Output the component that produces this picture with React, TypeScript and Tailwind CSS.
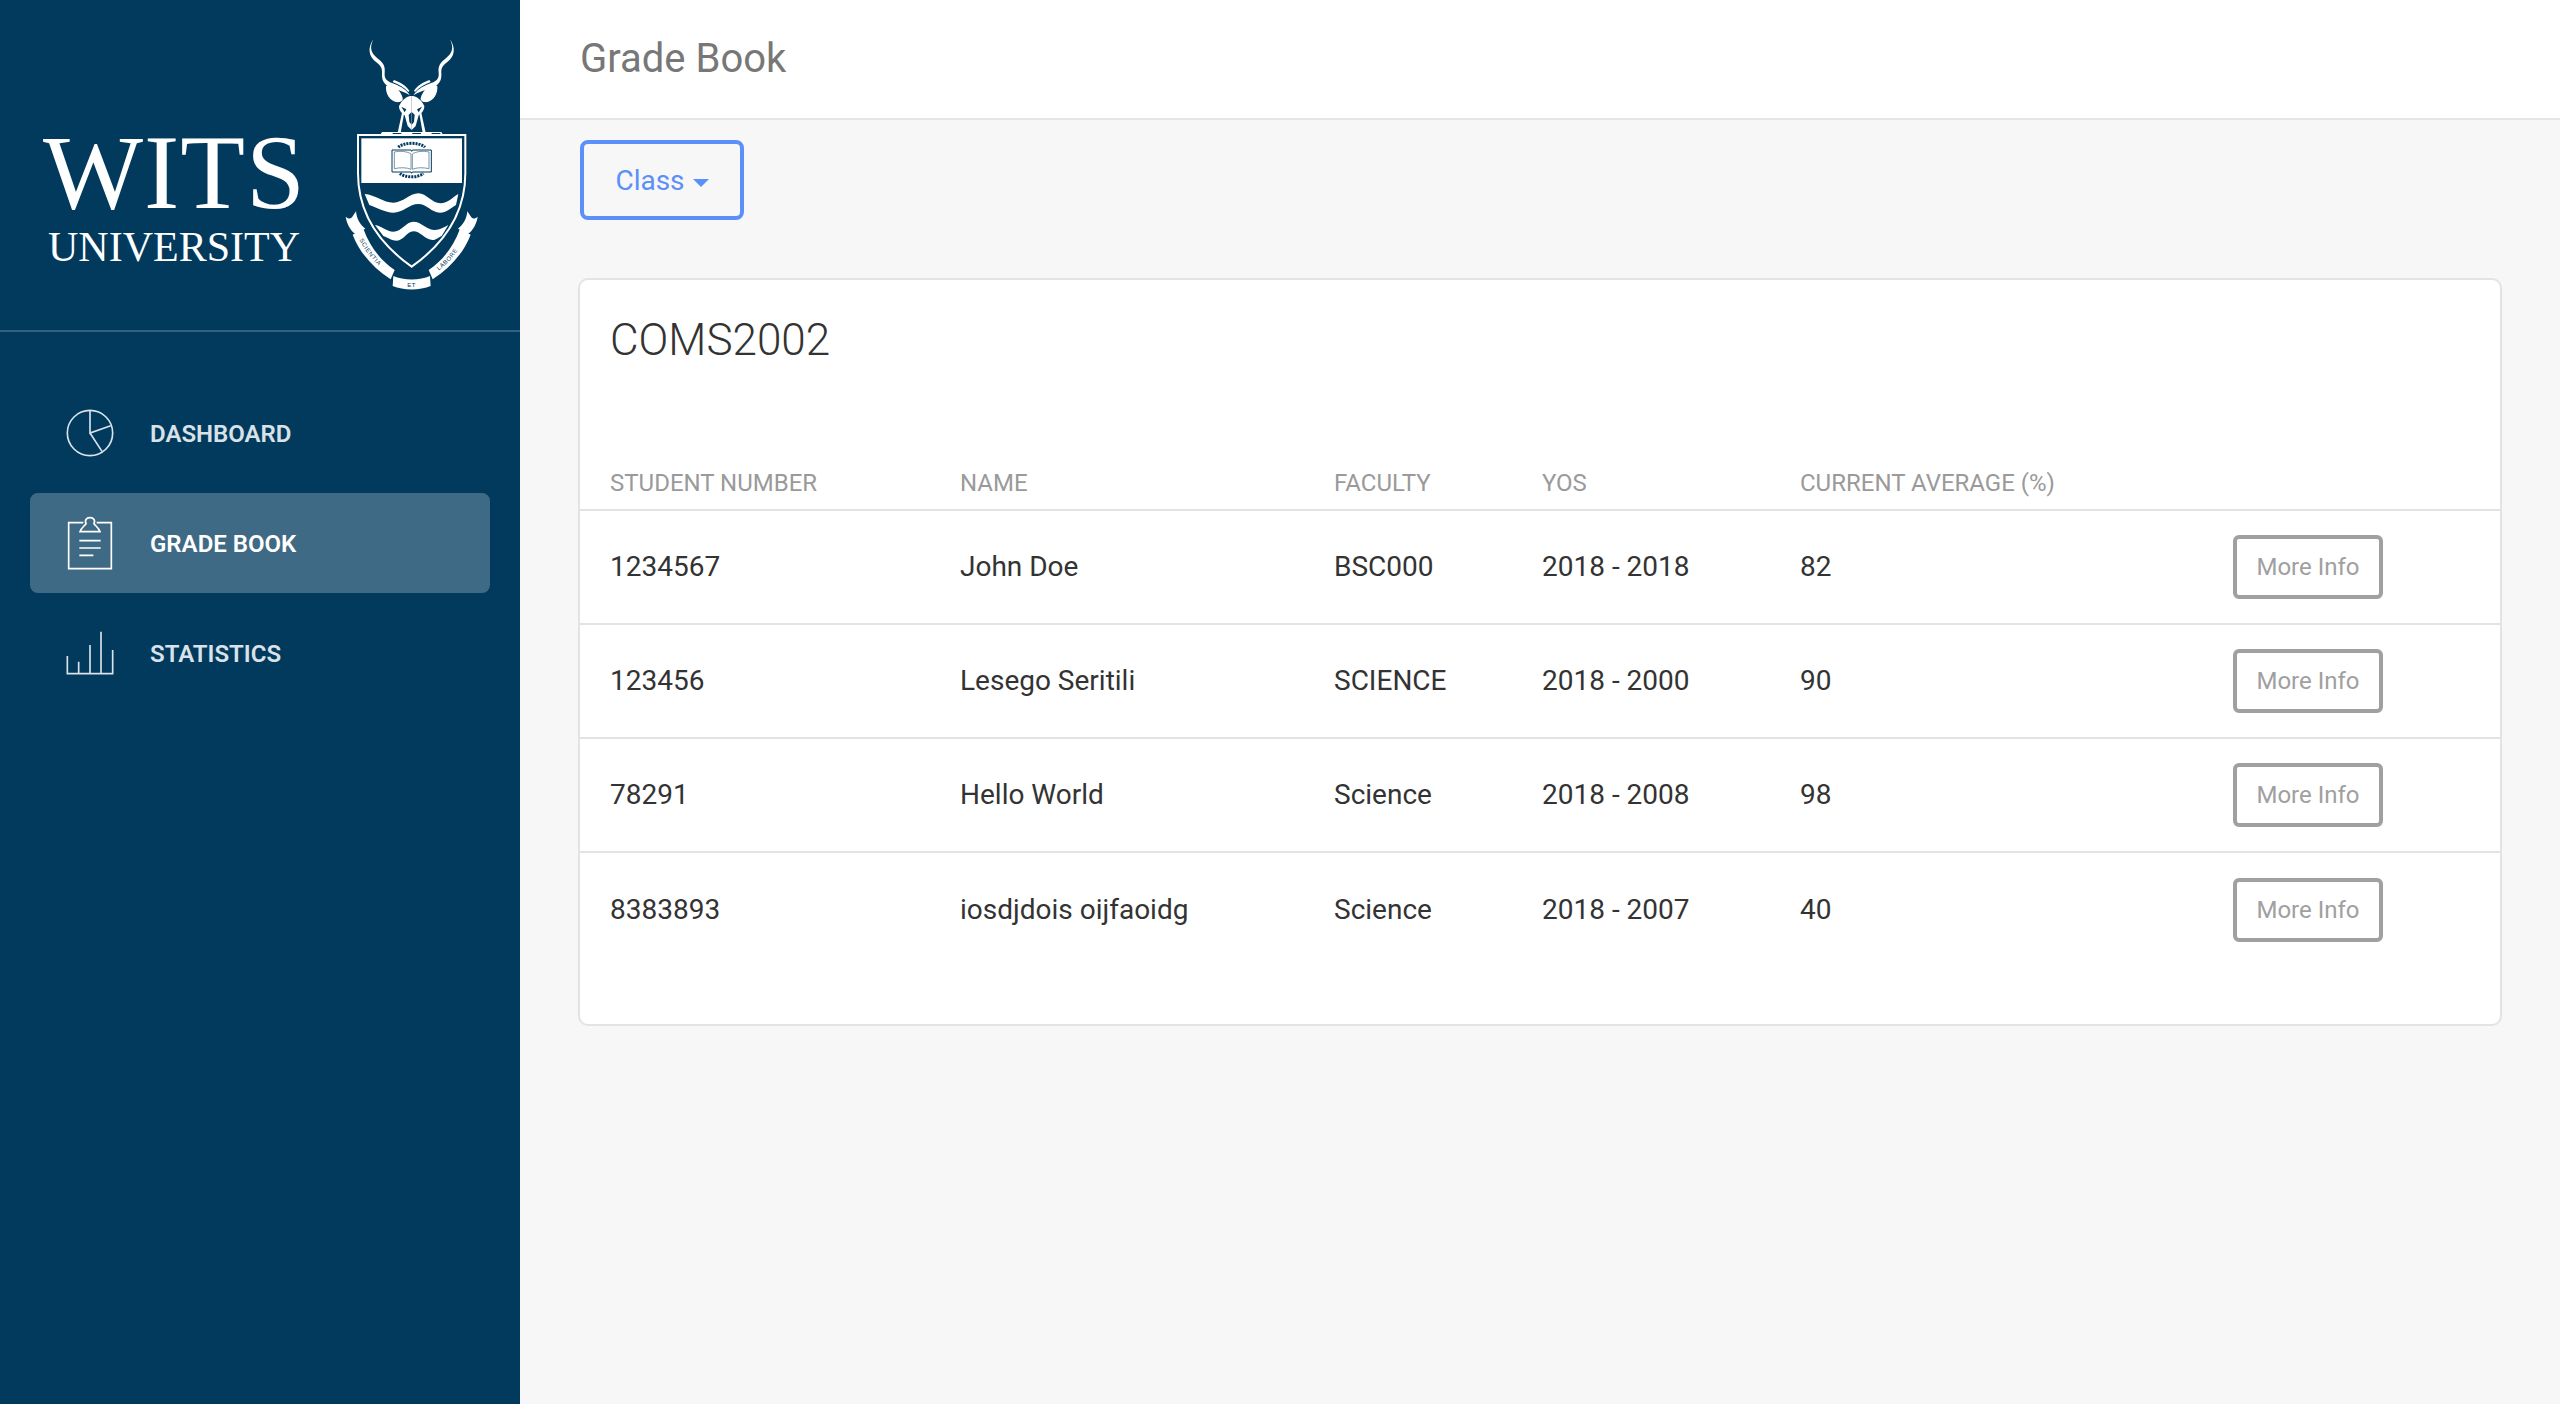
const rows = [
  { id: "1234567", name: "John Doe", faculty: "BSC000", yos: "2018 - 2018", avg: "82" },
  { id: "123456", name: "Lesego Seritili", faculty: "SCIENCE", yos: "2018 - 2000", avg: "90" },
  { id: "78291", name: "Hello World", faculty: "Science", yos: "2018 - 2008", avg: "98" },
  { id: "8383893", name: "iosdjdois oijfaoidg", faculty: "Science", yos: "2018 - 2007", avg: "40" },
];

function HalfKudu() {
  return (
    <g fill="#fff">
      {/* horn */}
      <path d="M130 28 C118 52 122 70 144 86 C160 98 166 108 164 128 C162 148 172 154 194 162 C214 170 230 180 240 196 C224 186 206 180 186 174 C166 168 154 154 156 130 C157 114 152 106 138 96 C116 80 112 54 130 28 Z" />
      <path d="M192 150 C212 157 226 166 238 182 L235 186 C222 172 208 164 188 156 Z" />
      {/* ear */}
      <path d="M168 168 C188 162 210 176 218 204 C220 214 208 218 198 216 C180 212 166 192 168 168 Z" />
      {/* face side */}
      <path d="M245 198 C232 198 222 206 214 216 L207 228 C207 242 216 250 224 256 L233 288 L245 300 Z" />
      <path d="M214 230 L229 238 L224 247 Z" fill="#023a5d" />
      <path d="M236 254 L245 246 L245 284 L238 276 Z" fill="#023a5d" />
      {/* neck */}
      <path d="M216 248 L222 252 L212 308 L203 308 Z" />
    </g>
  );
}

function HalfScroll({ flip }: { flip?: boolean }) {
  return (
    <g fill="#fff" transform={flip ? "translate(490 0) scale(-1 1)" : undefined}>
      <path d="M68 614 L100 596 C120 650 150 690 194 720 L182 748 C130 714 90 670 68 614 Z" />
      <path d="M47 560 C54 566 60 568 66 562 L78 544 C80 566 90 584 106 596 L76 612 C60 600 50 580 47 560 Z" />
    </g>
  );
}

function Crest() {
  return (
    <svg viewBox="0 0 480 780" className="h-[260px] w-[160px] shrink-0 overflow-visible">
      <HalfKudu />
      <g transform="translate(490 0) scale(-1 1)">
        <HalfKudu />
      </g>
      {/* lid */}
      <path d="M152 313 L156 306 L334 306 L338 313 Z" fill="#fff" />
      <rect x="188" y="309" width="26" height="7" fill="#023a5d" />
      <rect x="247" y="309" width="26" height="7" fill="#023a5d" />
      <rect x="305" y="309" width="26" height="7" fill="#023a5d" />
      {/* shield */}
      <path
        d="M84 315 L406 315 L406 430 C406 560 330 650 245 710 C160 650 84 560 84 430 Z"
        fill="#023a5d"
        stroke="#fff"
        strokeWidth="6"
      />
      <rect x="94" y="325" width="302" height="134" fill="#fff" />
      {/* waves */}
      <path d="M104 492 C135 494 160 518 190 518 C220 518 238 490 265 490 C290 490 305 520 332 520 C352 520 368 502 385 492 L378 525 C362 534 350 548 330 548 C305 548 290 522 265 522 C238 522 220 548 190 548 C165 548 140 532 118 525 Z" fill="#fff" />
      <path d="M135 585 C155 588 170 605 190 605 C215 605 228 575 250 575 C275 575 290 600 315 600 C330 600 342 592 355 585 L335 618 C325 622 320 630 308 630 C285 630 272 604 250 604 C230 604 222 632 200 632 C185 632 175 624 160 618 Z" fill="#fff" />
      {/* gear */}
      <path d="M205 352 C220 336 270 336 285 352" fill="none" stroke="#023a5d" strokeWidth="9" strokeDasharray="6 3" />
      <path d="M210 430 C224 444 266 444 280 430" fill="none" stroke="#023a5d" strokeWidth="9" strokeDasharray="6 3" />
      {/* book */}
      <path
        d="M186 360 L243 360 L245 364 L247 360 L304 360 L304 426 L247 426 L245 430 L243 426 L186 426 Z"
        fill="#fff"
        stroke="#023a5d"
        strokeWidth="3"
      />
      <path d="M193 366 C210 362 232 364 243 372 L243 418 C230 412 210 412 193 416 Z" fill="none" stroke="#5f7f97" strokeWidth="2.5" />
      <path d="M297 366 C280 362 258 364 247 372 L247 418 C260 412 280 412 297 416 Z" fill="none" stroke="#5f7f97" strokeWidth="2.5" />
      {/* motto */}
      <HalfScroll />
      <HalfScroll flip />
      <path d="M190 738 C220 752 270 752 300 738 L302 768 C270 782 220 782 188 768 Z" fill="#fff" />
      <path id="mottoL" d="M84 622 C106 668 140 708 182 734" fill="none" />
      <path id="mottoR" d="M308 734 C350 708 384 668 406 622" fill="none" />
      <text fontFamily="'Liberation Sans', sans-serif" fontSize="18" fill="#023a5d" letterSpacing="2">
        <textPath href="#mottoL" startOffset="8">
          SCIENTIA
        </textPath>
      </text>
      <text fontFamily="'Liberation Sans', sans-serif" fontSize="18" fill="#023a5d" letterSpacing="2">
        <textPath href="#mottoR" startOffset="22">
          LABORE
        </textPath>
      </text>
      <text x="245" y="771" textAnchor="middle" fontFamily="'Liberation Sans', sans-serif" fontSize="18" fill="#023a5d" letterSpacing="2">
        ET
      </text>
    </svg>
  );
}

function PieIcon() {
  return (
    <svg viewBox="195 85 150 150" className="h-[50px] w-[50px] shrink-0 overflow-visible" fill="none" stroke="currentColor" strokeWidth="5">
      <circle cx="270" cy="160" r="68" />
      <path d="M270 92 L270 160 L332 138 M270 160 L306 215" />
    </svg>
  );
}

function ClipIcon() {
  return (
    <svg viewBox="195 415 150 150" className="h-[50px] w-[50px] shrink-0 overflow-visible" fill="none" stroke="currentColor" strokeWidth="5">
      <path d="M250 429 L206 429 L206 567 L334 567 L334 429 L290 429" />
      <path d="M240 456 L300 456 C296 444 286 438 282 432 C288 418 276 414 270 414 C264 414 252 418 258 432 C254 438 244 444 240 456 Z" />
      <path d="M238 483 L302 483 M238 505 L302 505 M238 527 L280 527" />
    </svg>
  );
}

function BarsIcon() {
  return (
    <svg viewBox="195 746 150 150" className="h-[50px] w-[50px] shrink-0 overflow-visible" fill="none" stroke="currentColor" strokeWidth="5">
      <path d="M202 830 L202 883 L338 883 L338 812 M236 847 L236 883 M270 797 L270 883 M303 757 L303 883" />
    </svg>
  );
}

function NavItem({ label, active, icon }: { label: string; active?: boolean; icon: React.ReactNode }) {
  return (
    <a
      className={
        active
          ? "flex h-[100px] items-center gap-[35px] rounded-[8px] bg-[#3f6a85] pl-[35px] text-white"
          : "flex h-[100px] items-center gap-[35px] rounded-[8px] pl-[35px] text-[#d9e2e8]"
      }
    >
      {icon}
      <span className="mt-[2px] text-[24px] font-semibold leading-none">{label}</span>
    </a>
  );
}

export default function App() {
  return (
    <div className="flex min-h-[1404px] bg-[#f7f7f7] font-['Roboto',sans-serif]">
      <aside className="w-[520px] shrink-0 bg-[#023a5d]">
        <div className="flex h-[332px] items-start border-b-2 border-[#326080] pl-[43px]">
          <div className="mt-[121px] w-[287px] font-['Liberation_Serif',serif] text-white">
            <div className="text-[106px] leading-[104px] tracking-[1px]">WITS</div>
            <div className="pl-[5px] text-[42px] leading-[44px]">UNIVERSITY</div>
          </div>
          <div className="mt-[30px]">
            <Crest />
          </div>
        </div>
        <nav className="flex flex-col gap-[10px] px-[30px] pt-[51px]">
          <NavItem label="DASHBOARD" icon={<PieIcon />} />
          <NavItem label="GRADE BOOK" active icon={<ClipIcon />} />
          <NavItem label="STATISTICS" icon={<BarsIcon />} />
        </nav>
      </aside>

      <main className="min-w-0 flex-1">
        <header className="flex h-[120px] items-center border-b-2 border-[#e6e6e6] bg-white pl-[60px]">
          <h1 className="text-[40px] font-normal leading-none text-[#777777]">Grade Book</h1>
        </header>
        <div className="px-[58px] pt-[20px]">
          <button className="ml-[2px] flex h-[80px] w-[164px] items-center justify-center gap-[8px] rounded-[8px] border-4 border-[#5b8ff9] pt-[1px] text-[28px] leading-none text-[#5b8ff9]">
            Class
            <span className="mt-[4px] h-0 w-0 border-x-[8px] border-t-[8px] border-x-transparent border-t-[#5b8ff9]" />
          </button>
          <section className="mt-[58px] h-[748px] rounded-[10px] border-2 border-[#e3e3e3] bg-white">
            <h2 className="pl-[30px] pt-[33px] text-[44px] font-light leading-[54px] text-[#333333]">COMS2002</h2>
            <table className="mt-[92px] w-full table-fixed border-collapse">
              <thead>
                <tr className="h-[51px] border-b-2 border-[#e3e3e3] text-left text-[24px] text-[#9a9a9a]">
                  <th className="w-[380px] pb-[3px] pl-[30px] font-normal">STUDENT NUMBER</th>
                  <th className="w-[374px] pb-[3px] font-normal">NAME</th>
                  <th className="w-[208px] pb-[3px] font-normal">FACULTY</th>
                  <th className="w-[258px] pb-[3px] font-normal">YOS</th>
                  <th className="w-[433px] pb-[3px] font-normal">CURRENT AVERAGE (%)</th>
                  <th />
                </tr>
              </thead>
              <tbody>
                {rows.map((r, i) => (
                  <tr
                    key={r.id}
                    className={
                      i < rows.length - 1
                        ? "h-[114px] border-b-2 border-[#e3e3e3] text-[28px] text-[#333333]"
                        : "h-[114px] text-[28px] text-[#333333]"
                    }
                  >
                    <td className="pl-[30px]">{r.id}</td>
                    <td>{r.name}</td>
                    <td>{r.faculty}</td>
                    <td>{r.yos}</td>
                    <td>{r.avg}</td>
                    <td>
                      <button className="h-[64px] w-[150px] rounded-[6px] border-4 border-[#a0a0a0] text-[24px] leading-none text-[#a0a0a0]">
                        More Info
                      </button>
                    </td>
                  </tr>
                ))}
              </tbody>
            </table>
          </section>
        </div>
      </main>
    </div>
  );
}
